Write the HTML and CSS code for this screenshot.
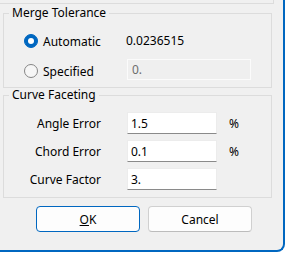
FILE: index.html
```html
<!DOCTYPE html>
<html lang="en">
<head>
    <meta charset="UTF-8">
    <title>Faceting Options</title>
    <link rel="stylesheet" href="styles.css">
</head>
<body>
    <div class="dialog">
        <div class="top-frame"></div>

        <fieldset class="group group-merge">
            <legend>Merge Tolerance</legend>
            <div class="merge-grid">
                <label class="radio"><span class="dot checked"></span>Automatic</label>
                <span class="value">0.0236515</span>
                <label class="radio"><span class="dot"></span>Specified</label>
                <input class="field disabled" type="text" value="0." disabled>
            </div>
        </fieldset>

        <fieldset class="group group-curve">
            <legend>Curve Faceting</legend>
            <div class="curve-grid">
                <label class="row-label">Angle Error</label>
                <input class="field" type="text" value="1.5">
                <span class="unit">%</span>

                <label class="row-label">Chord Error</label>
                <input class="field" type="text" value="0.1">
                <span class="unit">%</span>

                <label class="row-label">Curve Factor</label>
                <input class="field" type="text" value="3.">
                <span class="unit"></span>
            </div>
        </fieldset>

        <div class="buttons">
            <button class="btn btn-default"><u>O</u>K</button>
            <button class="btn">Cancel</button>
        </div>
    </div>
</body>
</html>
```

FILE: styles.css
```css
html, body {
    margin: 0;
    padding: 0;
    background: #ffffff;
}
body {
    font-family: "Noto Sans", "Open Sans", sans-serif;
    font-size: 12px;
    color: #000;
}
.dialog {
    box-sizing: border-box;
    width: 285px;
    height: 252px;
    background: #f0f0f0;
    border-right: 2px solid #0067c0;
    border-bottom: 2px solid #0067c0;
    border-bottom-right-radius: 8px;
    overflow: hidden;
}
.top-frame {
    width: 273px;
    height: 3px;
    border-right: 1px solid #dcdcdc;
    border-bottom: 1px solid #dcdcdc;
}
.group {
    box-sizing: border-box;
    width: 269px;
    margin: 0 0 0 3px;
    padding: 10px 0 7px 0;
    border: 1px solid #dcdcdc;
    min-width: 0;
}
.group legend {
    margin-left: 5px;
    padding: 0 3px;
    line-height: 14px;
    height: 14px;
}
.group-merge {
    margin-top: 2px;
}
.merge-grid {
    display: grid;
    grid-template-columns: 103px 124px;
    grid-auto-rows: 22px;
    row-gap: 6px;
    padding-left: 20px;
    align-items: center;
}
.radio {
    display: flex;
    align-items: center;
    gap: 5px;
}
.radio:last-of-type {
    position: relative;
    top: 2px;
}
.dot {
    box-sizing: border-box;
    width: 14px;
    height: 14px;
    border-radius: 50%;
    border: 1px solid #858585;
    background: #f6f6f6;
    display: flex;
    align-items: center;
    justify-content: center;
}
.dot.checked {
    border-color: #0067c0;
    background: #0067c0;
}
.dot.checked::after {
    content: "";
    width: 6px;
    height: 6px;
    border-radius: 50%;
    background: #fff;
}
.value {
    margin-left: -1px;
    margin-top: -2px;
}
.field {
    box-sizing: border-box;
    height: 22px;
    margin: 0;
    padding: 0 3px;
    font: inherit;
    color: #000;
    background: #fff;
    border: 1px solid #ececec;
    border-bottom: 1px solid #8a8a8a;
    border-radius: 0;
    outline: none;
}
.field.disabled {
    width: 124px;
    height: 21px;
    padding-left: 4px;
    color: #6d6d6d;
    background: #efefef;
    border: 1px solid #fbfbfb;
}
.curve-grid {
    display: grid;
    grid-template-columns: 111px 90px auto;
    grid-auto-rows: 22px;
    column-gap: 12px;
    row-gap: 6px;
    align-items: center;
}
.curve-grid .field {
    width: 90px;
}
.row-label {
    text-align: right;
    padding-right: 14px;
}
.buttons {
    display: flex;
    gap: 8px;
    padding-left: 36px;
    margin-top: 8px;
}
.btn {
    box-sizing: border-box;
    width: 104px;
    height: 26px;
    font: inherit;
    color: #000;
    background: #fdfdfd;
    border: 1px solid #d0d0d0;
    border-bottom-color: #bcbcbc;
    border-radius: 4px;
    padding: 0;
}
.btn-default {
    border: 1px solid #0067c0;
}
```
